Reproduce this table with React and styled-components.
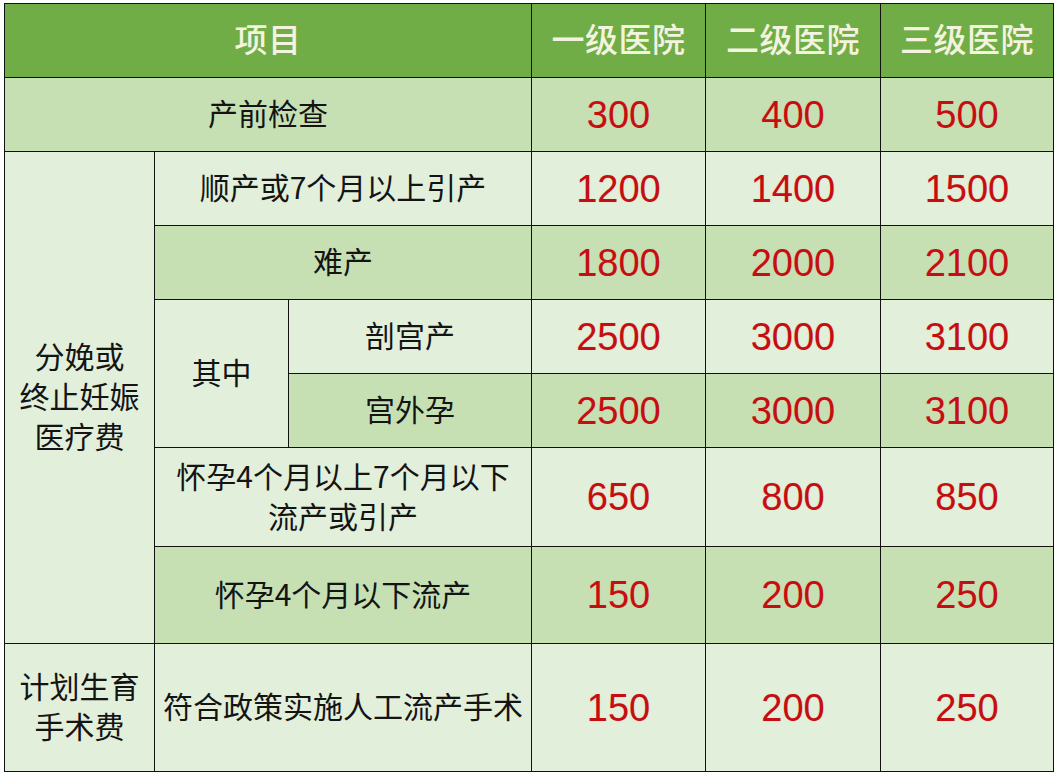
import React from 'react'
import styled, { createGlobalStyle } from 'styled-components'

const GlobalStyle = createGlobalStyle`
  html, body {
    margin: 0;
    padding: 0;
    background: #ffffff;
  }
`;

const Page = styled.div`
  padding: 3px 0 0 4px;
  width: 1058px;
  height: 775px;
  box-sizing: border-box;
  background: #ffffff;
`;

const Grid = styled.div`
  display: grid;
  grid-template-columns: 149px 133px 242px 173px 174px 172px;
  grid-template-rows: 73px 73px 73px 73px 73px 73px 98px 96px 127px;
  gap: 1px;
  padding: 1px;
  width: 1050px;
  box-sizing: border-box;
  background: #111111;
`;

const tones = {
  head: '#70ad47',
  dark: '#c6e0b4',
  light: '#e2efda',
};

const Cell = styled.div`
  display: flex;
  align-items: center;
  justify-content: center;
  text-align: center;
  padding-bottom: 5px;
  box-sizing: border-box;
  background: ${p => tones[p.$tone || 'light']};
  grid-column: ${p => p.$col || 'auto'};
  grid-row: ${p => p.$row || 'auto'};
  font-family: "Noto Sans CJK SC", "Noto Sans", sans-serif;
  font-size: 30px;
  line-height: 40px;
  color: #141414;
`;

const HeadCell = styled(Cell)`
  font-size: 33px;
  font-weight: 500;
  color: #f3f3df;
  letter-spacing: 0.5px;
`;

const Num = styled(Cell)`
  padding-bottom: 0;
  font-family: "Liberation Sans", Arial, sans-serif;
  font-size: 38px;
  color: #c40f12;
  text-shadow: 0 0 1px rgba(255, 160, 140, 0.6);
`;

const prices = [
  { row: '2', tone: 'dark', v: ['300', '400', '500'] },
  { row: '3', tone: 'light', v: ['1200', '1400', '1500'] },
  { row: '4', tone: 'dark', v: ['1800', '2000', '2100'] },
  { row: '5', tone: 'light', v: ['2500', '3000', '3100'] },
  { row: '6', tone: 'dark', v: ['2500', '3000', '3100'] },
  { row: '7', tone: 'light', v: ['650', '800', '850'] },
  { row: '8', tone: 'dark', v: ['150', '200', '250'] },
  { row: '9', tone: 'light', v: ['150', '200', '250'] },
];

const App = () => {
  return (
    <Page>
      <GlobalStyle />
      <Grid>
        <HeadCell $tone="head" $col="1 / 4" $row="1">项目</HeadCell>
        <HeadCell $tone="head" $col="4" $row="1">一级医院</HeadCell>
        <HeadCell $tone="head" $col="5" $row="1">二级医院</HeadCell>
        <HeadCell $tone="head" $col="6" $row="1">三级医院</HeadCell>

        <Cell $tone="dark" $col="1 / 4" $row="2">产前检查</Cell>

        <Cell $col="1" $row="3 / 9">分娩或<br />终止妊娠<br />医疗费</Cell>
        <Cell $col="2 / 4" $row="3">顺产或7个月以上引产</Cell>
        <Cell $tone="dark" $col="2 / 4" $row="4">难产</Cell>
        <Cell $col="2" $row="5 / 7">其中</Cell>
        <Cell $col="3" $row="5">剖宫产</Cell>
        <Cell $tone="dark" $col="3" $row="6">宫外孕</Cell>
        <Cell $col="2 / 4" $row="7">怀孕4个月以上7个月以下<br />流产或引产</Cell>
        <Cell $tone="dark" $col="2 / 4" $row="8">怀孕4个月以下流产</Cell>

        <Cell $col="1" $row="9">计划生育<br />手术费</Cell>
        <Cell $col="2 / 4" $row="9">符合政策实施人工流产手术</Cell>

        {prices.map(r =>
          r.v.map((n, i) => (
            <Num key={r.row + '-' + i} $tone={r.tone} $col={String(4 + i)} $row={r.row}>{n}</Num>
          ))
        )}
      </Grid>
    </Page>
  )
}

export default App
